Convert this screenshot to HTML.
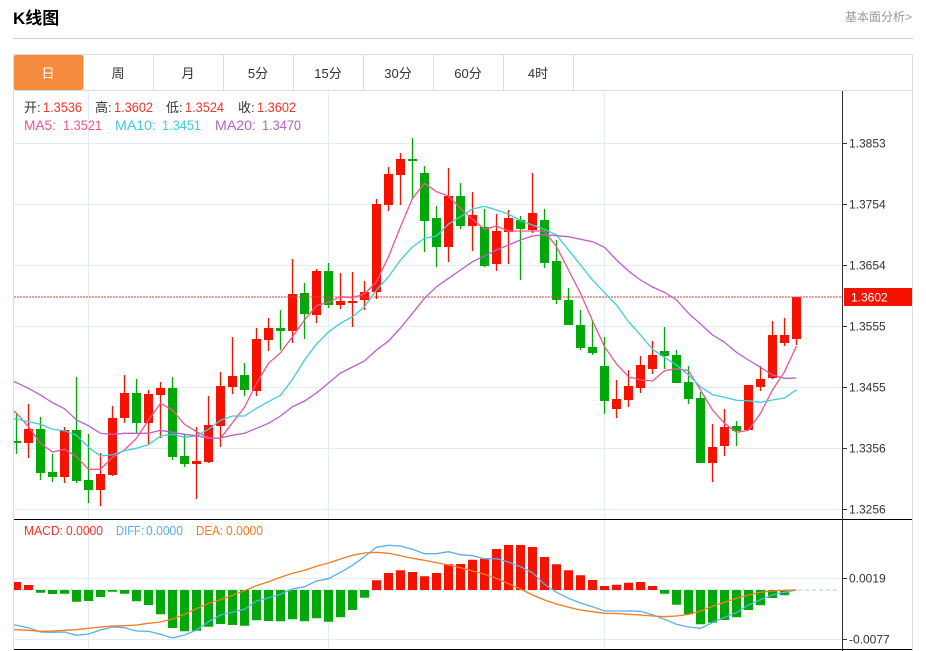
<!DOCTYPE html>
<html lang="zh">
<head>
<meta charset="utf-8">
<title>K线图</title>
<style>
html,body{margin:0;padding:0;background:#fff;width:926px;height:651px;overflow:hidden}
svg{position:absolute;left:0;top:0;display:block}
text{font-family:"Liberation Sans","Noto Sans CJK SC",sans-serif}
</style>
</head>
<body>
<svg width="926" height="651" viewBox="0 0 926 651" xmlns="http://www.w3.org/2000/svg">
<!-- header -->
<text x="13" y="24" font-size="17" font-weight="700" fill="#000">K线图</text>
<text x="845" y="21" font-size="12" fill="#999">基本面分析&gt;</text>
<path d="M13 38.5H913" stroke="#ccc" fill="none"/>
<!-- frame -->
<path d="M13.5 54.5H912.5V651M13.5 54.5V651M14 90.5H912.5" stroke="#ddd" fill="none"/>
<path d="M83.5 55V90M153.5 55V90M223.5 55V90M293.5 55V90M363.5 55V90M433.5 55V90M503.5 55V90M573.5 55V90" stroke="#ddd" fill="none"/>
<rect x="14" y="55" width="69" height="35" rx="2" fill="#f58b3f"/>
<g font-size="13" text-anchor="middle" fill="#333">
<text x="48" y="78" fill="#fff">日</text>
<text x="118" y="78">周</text>
<text x="188" y="78">月</text>
<text x="258" y="78">5分</text>
<text x="328" y="78">15分</text>
<text x="398" y="78">30分</text>
<text x="468" y="78">60分</text>
<text x="538" y="78">4时</text>
</g>
<!-- grid -->
<path d="M14 143.5H842M14 204.5H842M14 265.5H842M14 326.5H842M14 387.5H842M14 448.5H842M14 509.5H842M14 578.5H842M14 639.5H842M88.5 91V650M328.5 91V650M604.5 91V650" stroke="#e2edf4" fill="none"/>
<!-- candle wicks -->
<path fill="none" stroke="#f51300" stroke-width="1.3" d="M28.5 404V458M64.5 427V483M100.5 453V506M112.5 406V476M124.5 375V423M148.5 390V445M160.5 382V438M196.5 427V499M208.5 396V463M220.5 372V447M232.5 337V394M256.5 328V396M268.5 318V351M292.5 259V343M316.5 269V323M340.5 273V309M352.5 272V327M364.5 281V310M376.5 199V299M388.5 167V211M400.5 153V205M448.5 168V262M472.5 192V251M496.5 214V271M508.5 210V264M532.5 173V233M616.5 380V418M628.5 370V407M640.5 356V393M652.5 341V374M712.5 424V482M724.5 409V456M748.5 385V430M760.5 366V391M772.5 321V379M784.5 318V346M796.5 297V345"/>
<path fill="none" stroke="#00a808" stroke-width="1.3" d="M16.5 413V454M40.5 417V480M52.5 454V482M76.5 377V483M88.5 434V503M136.5 379V433M172.5 377V460M184.5 434V467M244.5 363V396M280.5 310V350M304.5 283V339M328.5 263V308M412.5 138V199M424.5 166V252M436.5 206V267M460.5 183V229M484.5 209V267M520.5 216V280M544.5 209V268M556.5 240V304M568.5 288V325M580.5 310V350M592.5 320V355M604.5 337V414M664.5 327V369M676.5 350V383M688.5 366V404M700.5 392V463M736.5 421V446"/>
<!-- candle bodies -->
<path fill="#f51300" d="M24 429h9V443h-9zM60 430h9V477h-9zM96 474h9V490h-9zM108 418h9V475h-9zM120 393h9V418h-9zM144 394h9V423h-9zM156 388h9V395h-9zM192 461h9V464h-9zM204 425h9V462h-9zM216 386h9V426h-9zM228 376h9V387h-9zM252 339h9V391h-9zM264 328h9V340h-9zM288 294h9V331h-9zM312 271h9V315h-9zM336 301h9V305h-9zM348 301h9V303h-9zM360 292h9V300h-9zM372 204h9V292h-9zM384 174h9V205h-9zM396 159h9V175h-9zM444 196h9V247h-9zM468 215h9V226h-9zM492 231h9V264h-9zM504 218h9V232h-9zM528 213h9V230h-9zM612 399h9V409h-9zM624 386h9V400h-9zM636 365h9V388h-9zM648 355h9V369h-9zM708 447h9V463h-9zM720 427h9V446h-9zM744 385h9V430h-9zM756 379h9V387h-9zM768 335h9V378h-9zM780 335h9V343h-9zM792 297h9V339h-9z"/>
<path fill="#00a808" d="M14 441h7V443h-7zM36 429h9V473h-9zM48 472h9V477h-9zM72 430h9V481h-9zM84 480h9V490h-9zM132 393h9V423h-9zM168 388h9V457h-9zM180 456h9V464h-9zM240 375h9V390h-9zM276 328h9V331h-9zM300 293h9V314h-9zM324 271h9V305h-9zM408 159h9V161h-9zM420 173h9V221h-9zM432 218h9V247h-9zM456 196h9V226h-9zM480 227h9V266h-9zM516 220h9V229h-9zM540 220h9V263h-9zM552 261h9V300h-9zM564 300h9V325h-9zM576 325h9V348h-9zM588 347h9V353h-9zM600 366h9V401h-9zM660 351h9V356h-9zM672 355h9V383h-9zM684 382h9V399h-9zM696 398h9V463h-9zM732 426h9V431h-9z"/>
<!-- price line -->
<path d="M14 297H842" stroke="#f0453a" stroke-width="1.6" stroke-dasharray="2 1" fill="none" opacity=".7"/>
<!-- MA lines -->
<polyline fill="none" stroke="#f0558f" stroke-width="1.3" points="14,411 16.5,413.3 28.5,426.7 40.5,443.3 52.5,452 64.5,449.3 76.5,456.7 88.5,469.3 100.5,469.3 112.5,457.3 124.5,450 136.5,438.3 148.5,420 160.5,403.3 172.5,410 184.5,424.3 196.5,431.7 208.5,437.7 220.5,438.3 232.5,422.7 244.5,407.3 256.5,383.3 268.5,363.3 280.5,352.7 292.5,336.7 304.5,320 316.5,305.7 328.5,302.3 340.5,296.7 352.5,297.7 364.5,294 376.5,281.7 388.5,256.7 400.5,226.7 412.5,198.3 424.5,183.3 436.5,191.7 448.5,196 460.5,208.3 472.5,219.3 484.5,229.3 496.5,226 508.5,231 520.5,231 532.5,231 544.5,231 556.5,246.7 568.5,270 580.5,293.3 592.5,320.7 604.5,346.7 616.5,364 628.5,376.7 640.5,380 652.5,381 664.5,370.7 676.5,368.7 688.5,370.7 700.5,390 712.5,410 724.5,423.3 736.5,432.3 748.5,430.3 760.5,413.3 772.5,390 784.5,371.7 796.5,346"/>
<polyline fill="none" stroke="#3fcbe0" stroke-width="1.3" points="14,418.7 16.5,419 28.5,421.7 40.5,424.3 52.5,429.3 64.5,430.7 76.5,435.3 88.5,447.3 100.5,456 112.5,454.7 124.5,450.7 136.5,448.3 148.5,444.7 160.5,436 172.5,434.3 184.5,437.3 196.5,435.7 208.5,429.3 220.5,420.3 232.5,416 244.5,416 256.5,408.3 268.5,401.7 280.5,395.3 292.5,379.3 304.5,360 316.5,344 328.5,332 340.5,323.3 352.5,316.7 364.5,306.7 376.5,290 388.5,276.7 400.5,260 412.5,246.7 424.5,238.3 436.5,236 448.5,224 460.5,216.7 472.5,209 484.5,206.3 496.5,210 508.5,214 520.5,220.7 532.5,225 544.5,229.3 556.5,235 568.5,250 580.5,265 592.5,280 604.5,292.7 616.5,305 628.5,321.7 640.5,335 652.5,349.3 664.5,357.3 676.5,365 688.5,375 700.5,386.7 712.5,394.7 724.5,397.3 736.5,400.3 748.5,400.7 760.5,402.3 772.5,400 784.5,398 796.5,389.7"/>
<polyline fill="none" stroke="#b960cb" stroke-width="1.3" points="14,381.5 16.5,382.7 28.5,388.3 40.5,395 52.5,402.7 64.5,408.7 76.5,420 88.5,425.7 100.5,433.3 112.5,434.3 124.5,433.3 136.5,433.3 148.5,433.3 160.5,430.3 172.5,432.3 184.5,434.3 196.5,435.7 208.5,438.3 220.5,438 232.5,435.3 244.5,433.3 256.5,428.3 268.5,423.3 280.5,416 292.5,406.7 304.5,401 316.5,393 328.5,383 340.5,373 352.5,367 364.5,361 376.5,350 388.5,341 400.5,328 412.5,313.3 424.5,298.3 436.5,286.7 448.5,278.3 460.5,270 472.5,261.7 484.5,256 496.5,250 508.5,245 520.5,240 532.5,236 544.5,234.7 556.5,235.7 568.5,236.7 580.5,239.3 592.5,241.7 604.5,247.3 616.5,260 628.5,271 640.5,280 652.5,287 664.5,292.3 676.5,300 688.5,313.3 700.5,324 712.5,335 724.5,342.3 736.5,352.3 748.5,360 760.5,367.3 772.5,375 784.5,378.3 796.5,378"/>
<!-- separators and axis -->
<path d="M14 519.5H912M14 649.5H912" stroke="#000" fill="none"/>
<path d="M842.5 91V651" stroke="#333" fill="none"/>
<path d="M843 143.5h4M843 204.5h4M843 265.5h4M843 326.5h4M843 387.5h4M843 448.5h4M843 509.5h4M843 578.5h4M843 639.5h4" stroke="#333" fill="none"/>
<rect x="844" y="288" width="68" height="18" fill="#f51300"/>
<g font-size="12" fill="#333">
<text x="849" y="147.5">1.3853</text>
<text x="849" y="208.5">1.3754</text>
<text x="849" y="269.5">1.3654</text>
<text x="849" y="330.5">1.3555</text>
<text x="849" y="391.5">1.3455</text>
<text x="849" y="452.5">1.3356</text>
<text x="849" y="513.5">1.3256</text>
<text x="849" y="582.5">0.0019</text>
<text x="849" y="643.5">-0.0077</text>
<text x="851" y="301.5" fill="#fff">1.3602</text>
</g>
<!-- legend -->
<g font-size="14">
<g fill="#333" font-size="13">
<text x="24" y="112">开:</text>
<text x="95" y="112">高:</text>
<text x="166" y="112">低:</text>
<text x="238" y="112">收:</text>
</g>
<g fill="#f2342a">
<text x="43" y="112" textLength="39" lengthAdjust="spacingAndGlyphs">1.3536</text>
<text x="114" y="112" textLength="39" lengthAdjust="spacingAndGlyphs">1.3602</text>
<text x="185" y="112" textLength="39" lengthAdjust="spacingAndGlyphs">1.3524</text>
<text x="257" y="112" textLength="39" lengthAdjust="spacingAndGlyphs">1.3602</text>
</g>
<g fill="#f0558f">
<text x="24" y="130" textLength="32" lengthAdjust="spacingAndGlyphs">MA5:</text>
<text x="63" y="130" textLength="39" lengthAdjust="spacingAndGlyphs">1.3521</text>
</g>
<g fill="#3fcbe0">
<text x="115" y="130" textLength="41" lengthAdjust="spacingAndGlyphs">MA10:</text>
<text x="162" y="130" textLength="39" lengthAdjust="spacingAndGlyphs">1.3451</text>
</g>
<g fill="#b960cb">
<text x="215" y="130" textLength="41" lengthAdjust="spacingAndGlyphs">MA20:</text>
<text x="262" y="130" textLength="39" lengthAdjust="spacingAndGlyphs">1.3470</text>
</g>
</g>
<!-- MACD zero line -->
<path d="M14 590H839" stroke="#bfe2f2" stroke-width="1.4" stroke-dasharray="4 3" fill="none"/>
<!-- MACD bars -->
<path fill="#f51300" d="M14 582h7V590h-7zM24 585h9V590h-9zM372 580.3h9V590h-9zM384 573h9V590h-9zM396 570.3h9V590h-9zM408 572h9V590h-9zM420 576.3h9V590h-9zM432 573h9V590h-9zM444 564.3h9V590h-9zM456 564h9V590h-9zM468 559.7h9V590h-9zM480 558.7h9V590h-9zM492 549h9V590h-9zM504 545h9V590h-9zM516 545h9V590h-9zM528 547h9V590h-9zM540 557h9V590h-9zM552 564.3h9V590h-9zM564 570.3h9V590h-9zM576 575.3h9V590h-9zM588 580h9V590h-9zM600 586h9V590h-9zM612 584.7h9V590h-9zM624 582.7h9V590h-9zM636 582h9V590h-9zM648 586h9V590h-9z"/>
<path fill="#00a808" d="M36 590h9V592.7h-9zM48 590h9V594h-9zM60 590h9V593.7h-9zM72 590h9V601.7h-9zM84 590h9V601h-9zM96 590h9V597h-9zM108 590h9V591.7h-9zM120 590h9V593.7h-9zM132 590h9V601.3h-9zM144 590h9V605h-9zM156 590h9V614.3h-9zM168 590h9V628h-9zM180 590h9V631.3h-9zM192 590h9V630.7h-9zM204 590h9V626.7h-9zM216 590h9V624h-9zM228 590h9V625h-9zM240 590h9V625.7h-9zM252 590h9V620.3h-9zM264 590h9V621h-9zM276 590h9V621.3h-9zM288 590h9V619.3h-9zM300 590h9V621.3h-9zM312 590h9V618.3h-9zM324 590h9V621.7h-9zM336 590h9V617.3h-9zM348 590h9V610h-9zM360 590h9V597.7h-9zM660 590h9V593.7h-9zM672 590h9V604.7h-9zM684 590h9V614.3h-9zM696 590h9V624.3h-9zM708 590h9V622.7h-9zM720 590h9V620h-9zM732 590h9V617.3h-9zM744 590h9V610h-9zM756 590h9V605.3h-9zM768 590h9V598h-9zM780 590h9V595.3h-9z"/>
<!-- DIFF / DEA -->
<polyline fill="none" stroke="#5aaef0" stroke-width="1.3" points="14,624.7 16.5,625.3 28.5,627.7 40.5,632 52.5,632.3 64.5,632 76.5,635.3 88.5,634 100.5,630 112.5,627 124.5,627.7 136.5,631 148.5,631.3 160.5,634.3 172.5,638 184.5,635 196.5,630 208.5,621.7 220.5,615 232.5,612.3 244.5,609.3 256.5,601 268.5,597.7 280.5,594.3 292.5,589 304.5,586.7 316.5,581 328.5,578.7 340.5,572.3 352.5,565.3 364.5,556.7 376.5,547.3 388.5,545.3 400.5,546 412.5,549.3 424.5,553.7 436.5,553.7 448.5,551.7 460.5,554.7 472.5,555.7 484.5,558.7 496.5,558.7 508.5,562 520.5,566.7 532.5,572.7 544.5,584.3 556.5,592.3 568.5,598.3 580.5,603 592.5,606.7 604.5,611 616.5,611 628.5,611 640.5,611.3 652.5,614.7 664.5,619.3 676.5,624.3 688.5,627 700.5,628.3 712.5,622.7 724.5,617.3 736.5,612.7 748.5,605 760.5,599.7 772.5,595 784.5,592.3 796.5,590"/>
<polyline fill="none" stroke="#f57a20" stroke-width="1.3" points="14,629.5 16.5,629.7 28.5,630.3 40.5,631.3 52.5,631 64.5,630.3 76.5,629.7 88.5,628.3 100.5,627 112.5,626 124.5,625.7 136.5,625 148.5,623.3 160.5,622 172.5,619 184.5,614.3 196.5,608.7 208.5,603.3 220.5,599.7 232.5,595.3 244.5,590.7 256.5,585.7 268.5,581.7 280.5,577.3 292.5,573.3 304.5,570.3 316.5,566.3 328.5,563 340.5,559 352.5,555.3 364.5,553 376.5,552.3 388.5,553.3 400.5,555.7 412.5,558.3 424.5,560.3 436.5,562.7 448.5,565 460.5,567.7 472.5,571 484.5,574.3 496.5,578.3 508.5,583.7 520.5,589 532.5,595 544.5,600 556.5,604 568.5,607.3 580.5,610 592.5,611.7 604.5,613.3 616.5,613.5 628.5,614.3 640.5,615 652.5,616 664.5,616.7 676.5,616 688.5,614.3 700.5,611 712.5,606.3 724.5,602.3 736.5,598.3 748.5,595 760.5,592.3 772.5,591 784.5,590.3 796.5,590"/>
<!-- MACD legend -->
<g font-size="13">
<text x="24" y="535" fill="#f2342a" textLength="39" lengthAdjust="spacingAndGlyphs">MACD:</text>
<text x="66" y="535" fill="#f2342a" textLength="37" lengthAdjust="spacingAndGlyphs">0.0000</text>
<text x="116" y="535" fill="#5aaef0" textLength="28" lengthAdjust="spacingAndGlyphs">DIFF:</text>
<text x="146" y="535" fill="#5aaef0" textLength="37" lengthAdjust="spacingAndGlyphs">0.0000</text>
<text x="196" y="535" fill="#f57a20" textLength="27" lengthAdjust="spacingAndGlyphs">DEA:</text>
<text x="226" y="535" fill="#f57a20" textLength="37" lengthAdjust="spacingAndGlyphs">0.0000</text>
</g>
</svg>
</body>
</html>
